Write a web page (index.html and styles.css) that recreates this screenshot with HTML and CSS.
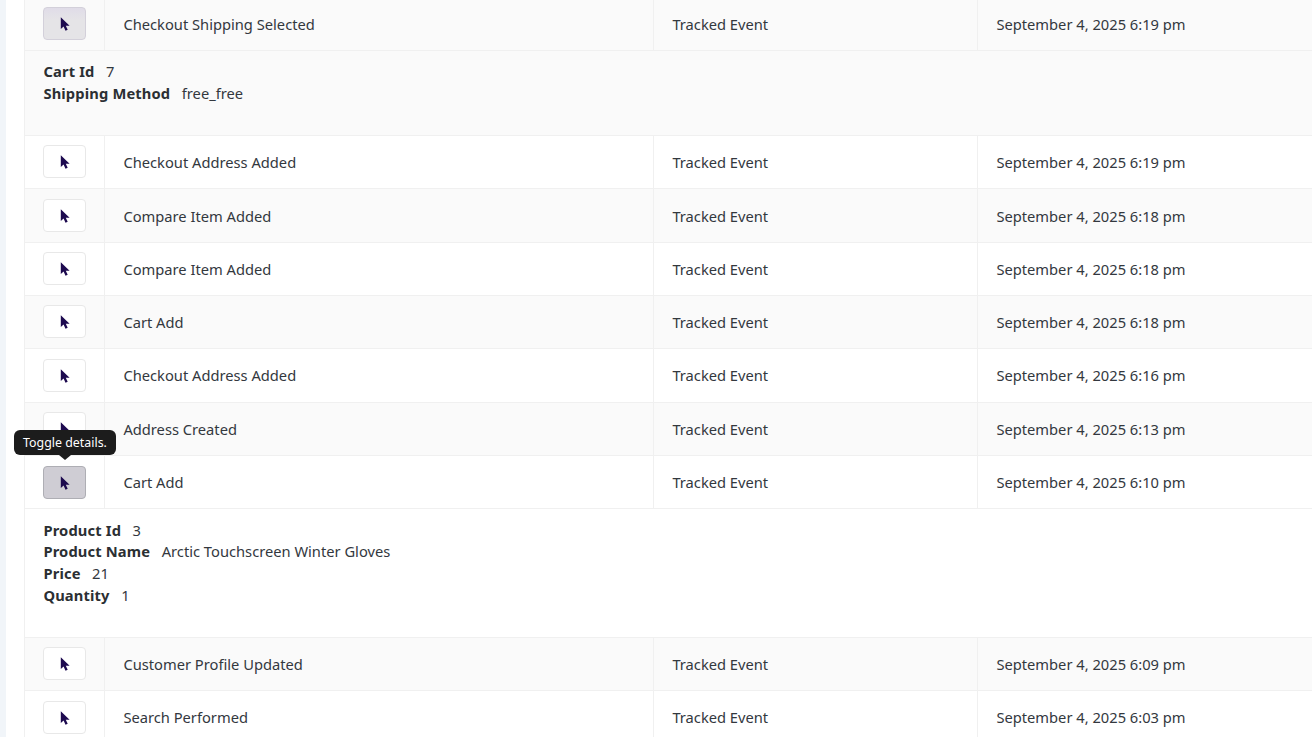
FILE: index.html
```html
<!DOCTYPE html>
<html lang="en">
<head>
<meta charset="utf-8">
<title>Customer events</title>
<link rel="stylesheet" href="styles.css">
</head>
<body>
<svg class="defs" width="0" height="0" aria-hidden="true">
  <symbol id="cursor" viewBox="0 0 10 14"><path d="M0.8 0.3V12l2.8-2.6L5.5 13.8 7.7 12.8 5.8 8.7H9.6Z"/></symbol>
</svg>
<main class="page">
  <table class="events">
    <colgroup><col class="c-btn"><col class="c-name"><col class="c-type"><col class="c-date"></colgroup>
    <tbody>
      <tr class="row alt"><td class="btn-cell"><button class="toggle hovered"><svg class="ico"><use href="#cursor"/></svg></button></td><td>Checkout Shipping Selected</td><td>Tracked Event</td><td>September 4, 2025 6:19 pm</td></tr>
      <tr class="detail alt h85"><td colspan="4"><div class="kv"><b>Cart Id</b><span>7</span></div><div class="kv"><b>Shipping Method</b><span>free_free</span></div></td></tr>
      <tr class="row"><td class="btn-cell"><button class="toggle"><svg class="ico"><use href="#cursor"/></svg></button></td><td>Checkout Address Added</td><td>Tracked Event</td><td>September 4, 2025 6:19 pm</td></tr>
      <tr class="row alt"><td class="btn-cell"><button class="toggle"><svg class="ico"><use href="#cursor"/></svg></button></td><td>Compare Item Added</td><td>Tracked Event</td><td>September 4, 2025 6:18 pm</td></tr>
      <tr class="row"><td class="btn-cell"><button class="toggle"><svg class="ico"><use href="#cursor"/></svg></button></td><td>Compare Item Added</td><td>Tracked Event</td><td>September 4, 2025 6:18 pm</td></tr>
      <tr class="row alt"><td class="btn-cell"><button class="toggle"><svg class="ico"><use href="#cursor"/></svg></button></td><td>Cart Add</td><td>Tracked Event</td><td>September 4, 2025 6:18 pm</td></tr>
      <tr class="row"><td class="btn-cell"><button class="toggle"><svg class="ico"><use href="#cursor"/></svg></button></td><td>Checkout Address Added</td><td>Tracked Event</td><td>September 4, 2025 6:16 pm</td></tr>
      <tr class="row alt"><td class="btn-cell"><button class="toggle"><svg class="ico"><use href="#cursor"/></svg></button></td><td>Address Created</td><td>Tracked Event</td><td>September 4, 2025 6:13 pm</td></tr>
      <tr class="row"><td class="btn-cell"><div class="tip-anchor"><button class="toggle active"><svg class="ico"><use href="#cursor"/></svg></button><div class="tooltip">Toggle details.</div></div></td><td>Cart Add</td><td>Tracked Event</td><td>September 4, 2025 6:10 pm</td></tr>
      <tr class="detail h129"><td colspan="4"><div class="kv"><b>Product Id</b><span>3</span></div><div class="kv"><b>Product Name</b><span>Arctic Touchscreen Winter Gloves</span></div><div class="kv"><b>Price</b><span>21</span></div><div class="kv"><b>Quantity</b><span>1</span></div></td></tr>
      <tr class="row alt"><td class="btn-cell"><button class="toggle"><svg class="ico"><use href="#cursor"/></svg></button></td><td>Customer Profile Updated</td><td>Tracked Event</td><td>September 4, 2025 6:09 pm</td></tr>
      <tr class="row"><td class="btn-cell"><button class="toggle"><svg class="ico"><use href="#cursor"/></svg></button></td><td>Search Performed</td><td>Tracked Event</td><td>September 4, 2025 6:03 pm</td></tr>
    </tbody>
  </table>
</main>
</body>
</html>
```
FILE: styles.css
```css
html, body { margin: 0; height: 100%; overflow: hidden; background: #fff; }
body {
  font-family: "Noto Sans", "Open Sans", sans-serif;
  font-size: 14.7px;
  color: #33383e;
  border-left: 6px solid #f1f5f9;
}
.defs { position: absolute; }
.page { padding-left: 18px; margin-top: -2.38px; }
.events {
  table-layout: fixed;
  width: 1340px;
  border-collapse: separate;
  border-spacing: 0;
  border-left: 1px solid #f0f0f0;
}
.c-btn { width: 79px; }
.c-name { width: 549px; }
.c-type { width: 324px; }
.events td {
  border-bottom: 1px solid #f0f0f0;
  border-left: 1px solid #f0f0f0;
  padding: 0.2px 18px 0 18.4px;
  vertical-align: middle;
}
.events td:first-child { border-left: 0; }
.events .btn-cell { padding: 0 18px 0.4px; }
.row td { height: 52.13px; }
.row .btn-cell { height: 51.93px; }
.alt td { background: #fafafa; }
.toggle {
  display: flex;
  align-items: center;
  justify-content: center;
  width: 43px;
  height: 33px;
  padding: 1px 0 0;
  background: #fff;
  border: 1px solid #e8e8e8;
  border-radius: 4px;
}
.toggle.hovered { background: linear-gradient(#e0dce8, #e5e4e7 40%); border-color: #d3d0da; }
.toggle.active { background: #cfcdd4; border-color: #aeaeb4; }
.ico { width: 10px; height: 14px; fill: #1d0a4f; }
.events .detail td { padding: 10.5px 18px 0 18.4px; vertical-align: top; line-height: 21.6px; }
.h85 td { height: 73.5px; }
.h129 td { height: 117.2px; }
.detail.h129 .kv:first-child { padding-top: 0.2px; }
.kv b { font-weight: 700; color: #2b2f33; margin-right: 11.5px; letter-spacing: 0.15px; }
.tip-anchor { position: relative; padding-top: 1px; }
.tooltip {
  position: absolute;
  left: -29px;
  top: -34.5px;
  width: 102px;
  height: 25px;
  background: #1c1c1c;
  color: #fff;
  font-size: 12.4px;
  line-height: 25px;
  text-align: center;
  border-radius: 6px;
}
.tooltip::after {
  content: "";
  position: absolute;
  left: 45px;
  bottom: -5px;
  border: 6px solid transparent;
  border-bottom: 0;
  border-top: 5px solid #1c1c1c;
}
```
